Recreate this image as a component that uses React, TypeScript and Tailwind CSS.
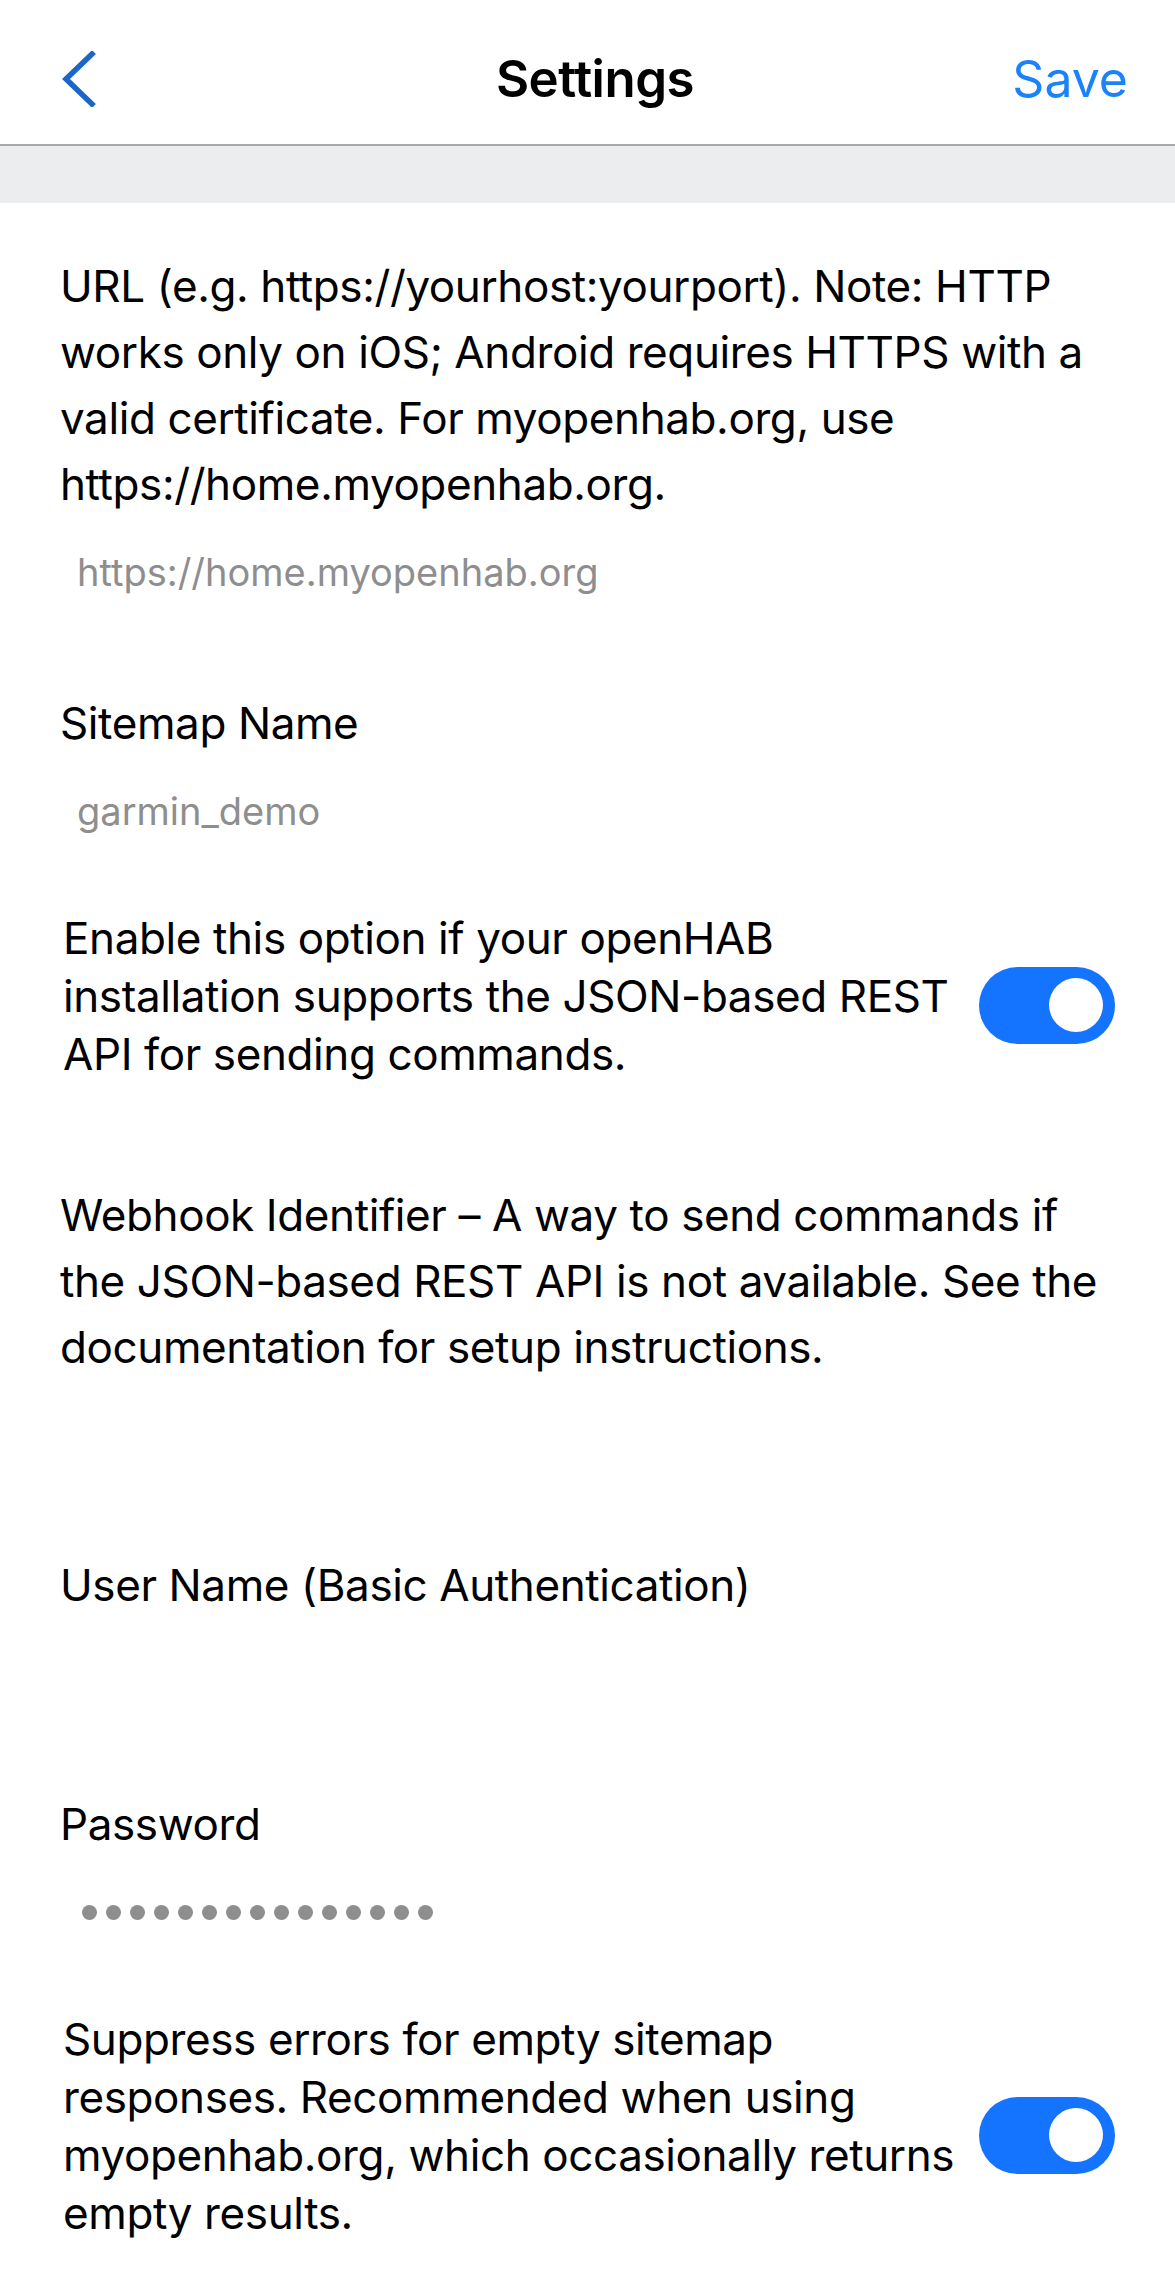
import React from "react";

const Toggle = () => (
  <div className="flex h-[77px] w-[136px] shrink-0 items-center justify-end rounded-full bg-[#1473ff] pr-[12px]">
    <div className="h-[54px] w-[54px] rounded-full bg-white" />
  </div>
);

const Field = ({
  label,
  value,
  className = "",
  children,
}: {
  label: string;
  value?: string;
  className?: string;
  children?: React.ReactNode;
}) => (
  <div className={className}>
    <p className="text-[44px] leading-[66px] tracking-[-0.009em] text-black">{label}</p>
    <div className="flex h-[110px] items-center pl-[17px] text-[38px] text-[#8e8e8e]">
      {children ?? value}
    </div>
  </div>
);

const ToggleRow = ({ text, className = "" }: { text: string; className?: string }) => (
  <div className={"flex items-center gap-[4px] pl-[3px] " + className}>
    <p className="flex-1 text-[44px] leading-[58px] tracking-[-0.009em] text-black">{text}</p>
    <div className="pt-[18px]">
      <Toggle />
    </div>
  </div>
);

export default function App() {
  return (
    <div className="min-h-[2294px] w-full bg-white [font-family:Inter,'Noto_Sans',sans-serif]">
      {/* Nav bar */}
      <header className="grid h-[146px] grid-cols-[1fr_auto_1fr] items-center border-b-2 border-[#a9a9ab] pl-[62px] pr-[47px] pt-[14px]">
        <div>
          <svg width="36" height="56" viewBox="0 0 36 56" fill="none">
            <path
              d="M30 3 L4 28 L30 53"
              stroke="#1a66c9"
              strokeWidth="5.5"
              strokeLinecap="square"
              strokeLinejoin="miter"
            />
          </svg>
        </div>
        <h1 className="text-[51px] font-semibold tracking-[-0.01em] text-black">Settings</h1>
        <div className="text-right text-[50px] text-[#1a82fb]">Save</div>
      </header>
      <div className="h-[57px] bg-[#ecedef]" />

      {/* Form */}
      <main className="flex flex-col px-[60px]">
        <Field
          className="mt-[50px]"
          label="URL (e.g. https://yourhost:yourport). Note: HTTP works only on iOS; Android requires HTTPS with a valid certificate. For myopenhab.org, use https://home.myopenhab.org."
          value="https://home.myopenhab.org"
        />
        <Field className="mt-[63px]" label="Sitemap Name" value="garmin_demo" />
        <ToggleRow
          className="mt-[43px]"
          text="Enable this option if your openHAB installation supports the JSON-based REST API for sending commands."
        />
        <Field
          className="mt-[99px]"
          label="Webhook Identifier – A way to send commands if the JSON-based REST API is not available. See the documentation for setup instructions."
          value=""
        />
        <Field className="mt-[62px]" label="User Name (Basic Authentication)" value="" />
        <Field className="mt-[63px]" label="Password">
          <div className="flex gap-[9px] pl-[5px]">
            {Array.from({ length: 15 }).map((_, i) => (
              <span key={i} className="h-[15px] w-[15px] rounded-full bg-[#8e8e8e]" />
            ))}
          </div>
        </Field>
        <ToggleRow
          className="mt-[43px]"
          text="Suppress errors for empty sitemap responses. Recommended when using myopenhab.org, which occasionally returns empty results."
        />
      </main>
    </div>
  );
}
